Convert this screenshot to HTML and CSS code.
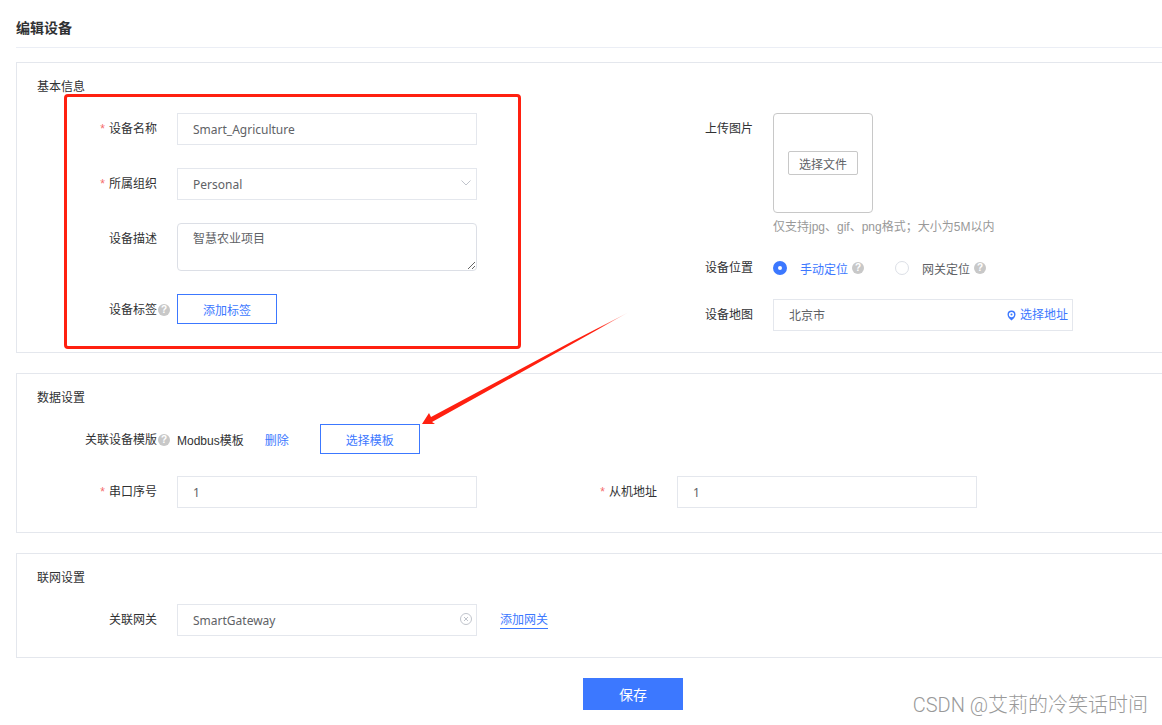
FILE: index.html
```html
<!DOCTYPE html>
<html lang="zh-CN">
<head>
    <meta charset="UTF-8">
    <meta name="viewport" content="width=device-width, initial-scale=1.0">
    <title>编辑设备</title>
    <link rel="stylesheet" href="styles.css">
</head>
<body>

<div class="page">
    <h1 class="page-title">编辑设备</h1>

    <form>
        <section class="panel">
            <h2 class="panel-title">基本信息</h2>
            <div class="columns">
                <div class="column">
                    <div class="row">
                        <label class="label required" for="name">设备名称</label>
                        <input class="field" type="text" id="name" value="Smart_Agriculture">
                    </div>
                    <div class="row">
                        <label class="label required" for="org">所属组织</label>
                        <div class="field-wrap">
                            <select class="field" id="org">
                                <option>Personal</option>
                            </select>
                            <svg class="field-icon" width="12" height="12" viewBox="0 0 12 12" fill="none" stroke="#c0c4cc"><path d="M1.5 3.5 6 8l4.5-4.5"/></svg>
                        </div>
                    </div>
                    <div class="row">
                        <label class="label" for="desc">设备描述</label>
                        <textarea class="field textarea" id="desc">智慧农业项目</textarea>
                    </div>
                    <div class="row">
                        <span class="label label-help">设备标签<span class="help">?</span></span>
                        <button class="btn" type="button">添加标签</button>
                    </div>
                </div>

                <div class="column column-right">
                    <div class="row">
                        <span class="label">上传图片</span>
                        <div>
                            <div class="upload">
                                <button class="upload-btn" type="button">选择文件</button>
                            </div>
                            <p class="hint">仅支持jpg、gif、png格式；大小为5M以内</p>
                        </div>
                    </div>
                    <div class="row">
                        <span class="label">设备位置</span>
                        <div class="radios">
                            <div class="radio">
                                <input type="radio" name="position" id="manual" checked>
                                <label for="manual">手动定位</label>
                                <span class="help">?</span>
                            </div>
                            <div class="radio">
                                <input type="radio" name="position" id="gateway-pos">
                                <label for="gateway-pos">网关定位</label>
                                <span class="help">?</span>
                            </div>
                        </div>
                    </div>
                    <div class="row">
                        <label class="label" for="map">设备地图</label>
                        <div class="field-wrap">
                            <input class="field" type="text" id="map" value="北京市">
                            <a class="pick" href="#">
                                <svg width="9" height="11" viewBox="0 0 9 11"><path fill="#3c78ff" fill-rule="evenodd" d="M4.500 .5a4 4 0 0 1 4 4c0 2.500-2.200 4.700-4 6-1.800-1.300-4-3.500-4-6a4 4 0 0 1 4-4zm0 1.500a2.600 2.600 0 1 0 0 5.200 2.600 2.600 0 0 0 0-5.200z"/><circle cx="4.500" cy="4.600" r="1" fill="#3c78ff"/></svg>
                                选择地址
                            </a>
                        </div>
                    </div>
                </div>
            </div>
        </section>

        <section class="panel panel-data">
            <h2 class="panel-title">数据设置</h2>
            <div class="row">
                <span class="label label-help">关联设备模版<span class="help">?</span></span>
                <div class="template">
                    <span>Modbus模板</span>
                    <a href="#">删除</a>
                    <button class="btn" type="button">选择模板</button>
                </div>
            </div>
            <div class="row-pair">
                <div class="row">
                    <label class="label required" for="port">串口序号</label>
                    <input class="field" type="text" id="port" value="1">
                </div>
                <div class="row">
                    <label class="label required" for="slave">从机地址</label>
                    <input class="field" type="text" id="slave" value="1">
                </div>
            </div>
        </section>

        <section class="panel">
            <h2 class="panel-title">联网设置</h2>
            <div class="row">
                <label class="label" for="gateway">关联网关</label>
                <div class="field-wrap">
                    <input class="field" type="text" id="gateway" value="SmartGateway">
                    <svg class="field-icon" width="12" height="12" viewBox="0 0 12 12" fill="none" stroke="#c0c4cc"><circle cx="6" cy="6" r="5.500"/><path d="m4 4 4 4M8 4 4 8"/></svg>
                </div>
                <a class="add-link" href="#">添加网关</a>
            </div>
        </section>

        <div class="footer">
            <button class="save" type="submit">保存</button>
        </div>
    </form>

    <!-- marks drawn over the form -->
    <div class="mark-box"></div>
    <svg class="mark-arrow" width="210" height="116" viewBox="0 0 210 116">
        <defs>
            <linearGradient id="fade" x1="0" x2="1" y1="1" y2="0">
                <stop offset="0.85" stop-color="#ff2010"/>
                <stop offset="1" stop-color="#ff2010" stop-opacity="0.1"/>
            </linearGradient>
        </defs>
        <path fill="url(#fade)" d="M1 112 8 101l2 4L150 30 208 0l-57 32L11 110l3 2z"/>
    </svg>
    <div class="watermark">CSDN @艾莉的冷笑话时间</div>
</div>

</body>
</html>
```
FILE: styles.css
```css
* {
    box-sizing: border-box;
}
body {
    margin: 0;
    background: #fff;
    color: #303133;
    font-family: "Liberation Sans", "Noto Sans CJK SC", sans-serif;
    font-size: 12px;
}
button, input, select, textarea {
    font-family: inherit;
    font-size: 12px;
}
a {
    color: #3c78ff;
    text-decoration: none;
}
.page {
    position: relative;
    min-height: 100vh;
    padding-left: 16px;
    overflow: hidden;
}
.page-title {
    margin: 0 0 14px;
    padding: 18px 0 9px;
    border-bottom: 1px solid #ebeef5;
    font-size: 14px;
    line-height: 20px;
}

/* panels */
.panel {
    margin-bottom: 20px;
    padding-bottom: 21px;
    border: 1px solid #e4e7ed;
    border-right: 0;
}
.panel-data {
    padding-bottom: 24px;
}
.panel-title {
    margin: 0;
    padding: 14px 20px 16px;
    font-size: 12px;
    font-weight: normal;
    line-height: 20px;
}
.columns {
    display: grid;
    grid-template-columns: minmax(500px, 596px) 1fr;
}
.column {
    display: flex;
    flex-direction: column;
    gap: 23px;
}
.column-right {
    gap: 15px;
}
.row {
    display: flex;
    align-items: flex-start;
}
.row-pair {
    display: flex;
    gap: 40px;
    margin-top: 20px;
}

/* labels and fields */
.label {
    display: flex;
    flex: none;
    align-items: center;
    justify-content: flex-end;
    width: 160px;
    padding-right: 20px;
    line-height: 32px;
}
.label-help {
    padding-right: 7px;
}
.required::before {
    content: "*";
    margin-right: 4px;
    color: #f56c6c;
}
.field {
    width: 300px;
    height: 32px;
    padding: 0 15px;
    border: 1px solid #e4e7ed;
    border-radius: 0;
    outline: none;
    background: #fff;
    color: #606266;
    font-family: "Noto Sans", "Noto Sans CJK SC", sans-serif;
    appearance: none;
}
.field-wrap {
    position: relative;
    width: 300px;
}
.field-icon {
    position: absolute;
    top: 9px;
    right: 5px;
}
.textarea {
    height: 48px;
    padding: 6px 15px;
    border-color: #dcdfe6;
    border-radius: 4px;
    line-height: 18px;
}
.help {
    width: 12px;
    height: 12px;
    margin-left: 1px;
    border-radius: 50%;
    background: #c8c8c8;
    color: #fff;
    font-size: 10px;
    font-weight: bold;
    line-height: 12px;
    text-align: center;
}
.btn {
    width: 100px;
    height: 30px;
    border: 1px solid #3c78ff;
    background: #fff;
    color: #3c78ff;
}

/* upload, position and map */
.upload {
    display: flex;
    align-items: center;
    justify-content: center;
    width: 100px;
    height: 100px;
    border: 1px solid #c8c8c8;
    border-radius: 4px;
}
.upload-btn {
    width: 70px;
    height: 24px;
    padding: 0;
    border: 1px solid #c8c8c8;
    border-radius: 2px;
    background: #fff;
    color: #606266;
}
.hint {
    margin: 4px 0 0;
    color: #999;
    line-height: 20px;
}
.radios {
    display: flex;
    gap: 31px;
    height: 32px;
}
.radio {
    display: flex;
    align-items: center;
    color: #606266;
}
.radio input {
    width: 14px;
    height: 14px;
    margin: 0 13px 0 0;
    border: 1px solid #dcdfe6;
    border-radius: 50%;
    appearance: none;
}
.radio input:checked {
    border: 5px solid #3c78ff;
}
.radio input:checked + label {
    color: #3c78ff;
}
.radio .help {
    margin-left: 4px;
}
.pick {
    position: absolute;
    top: 0;
    right: 5px;
    display: flex;
    align-items: center;
    gap: 4px;
    line-height: 32px;
}

/* template row */
.template {
    display: flex;
    align-items: center;
}
.template a {
    margin: 0 31px 0 21px;
}
.add-link {
    margin: 9px 0 0 23px;
    border-bottom: 1px solid #3c78ff;
    line-height: 15px;
}
.footer {
    display: flex;
    justify-content: center;
    padding-left: 88px;
}
.save {
    width: 100px;
    height: 32px;
    border: 0;
    background: #3c78ff;
    color: #fff;
    font-size: 14px;
}

/* overlay */
.mark-box {
    position: absolute;
    top: 94px;
    left: 64px;
    width: 457px;
    height: 255px;
    border: 3px solid #ff2010;
    border-radius: 4px;
    pointer-events: none;
}
.mark-arrow {
    position: absolute;
    top: 312px;
    left: 421px;
    pointer-events: none;
}
.watermark {
    position: absolute;
    right: 14px;
    bottom: 6px;
    color: #999;
    font-family: Roboto, "Noto Sans CJK SC", sans-serif;
    font-size: 20px;
    font-weight: 300;
    line-height: 28px;
}
```
